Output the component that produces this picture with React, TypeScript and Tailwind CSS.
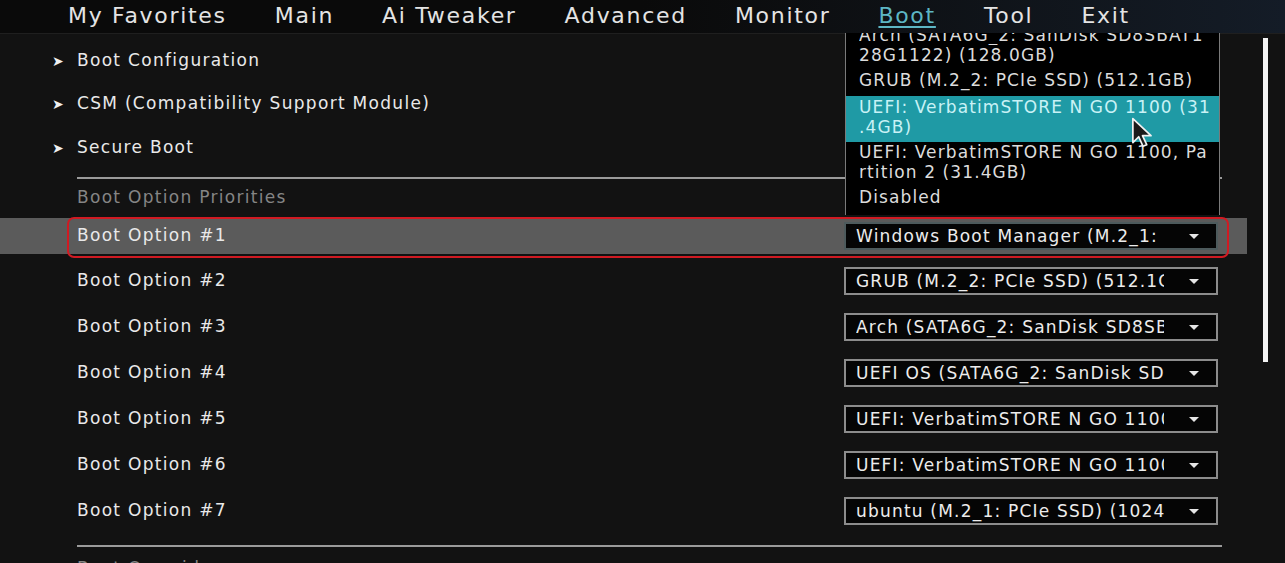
import React from "react";

const tabs = ["My Favorites", "Main", "Ai Tweaker", "Advanced", "Monitor", "Boot", "Tool", "Exit"];

const menus = [
  { label: "Boot Configuration", h: "h-[44px]" },
  { label: "CSM (Compatibility Support Module)", h: "h-[42px]" },
  { label: "Secure Boot", h: "h-[46px]" },
];

const options = [
  "Windows Boot Manager (M.2_1: PCIe SSD) (1024.2GB)",
  "GRUB (M.2_2: PCIe SSD) (512.1GB)",
  "Arch (SATA6G_2: SanDisk SD8SBAT128G1122) (128.0GB)",
  "UEFI OS (SATA6G_2: SanDisk SD8SBAT128G1122) (128.0GB)",
  "UEFI: VerbatimSTORE N GO 1100 (31.4GB)",
  "UEFI: VerbatimSTORE N GO 1100, Partition 2 (31.4GB)",
  "ubuntu (M.2_1: PCIe SSD) (1024.2GB)",
];

function Caret() {
  return (
    <svg width="12" height="7" viewBox="0 0 12 7" className="shrink-0">
      <path d="M1 1 L11 1 L6 6 Z" fill="#e6e6e6" />
    </svg>
  );
}

function SelectBox({ value, active }: { value: string; active?: boolean }) {
  return (
    <div
      className={`w-[374px] h-[28px] flex items-center bg-[#050505] border-2 ${
        active ? "border-[#4d5a5c]" : "border-[#8c8c8c]"
      }`}
    >
      <div className="w-[308px] ml-[10px] overflow-hidden whitespace-nowrap text-[17px] tracking-[1.2px] text-[#ececec] leading-[22px]">
        {value}
      </div>
      <div className="flex-1 flex justify-center pl-[8px]">
        <Caret />
      </div>
    </div>
  );
}

function Cursor() {
  return (
    <svg width="24" height="32" viewBox="0 0 22 30" className="absolute left-[1131px] top-[117px]">
      <path
        d="M1.5 1.5 L1.5 24 L7 18.5 L11 27.5 L14.5 26 L10.5 17.5 L18.5 17.5 Z"
        fill="#1a1a1a"
        stroke="#f2f2f2"
        strokeWidth="1.6"
        strokeLinejoin="round"
      />
    </svg>
  );
}

export default function App() {
  return (
    <div className="relative w-[1285px] h-[563px] overflow-hidden bg-[#121212] font-['DejaVu_Sans',sans-serif] text-[#e9e9e9]">
      {/* Top tabs */}
      <div className="h-[34px] flex items-start pt-[3px] pl-[68px] gap-[48px] border-b border-[#1f1f1f] bg-gradient-to-r from-[#0a0a0a] via-[#0a0a0a] to-[#141c27]">
        {tabs.map((t) =>
          t === "Boot" ? (
            <span
              key={t}
              className="text-[22px] tracking-[1.7px] leading-[26px] text-[#5db6c4] underline decoration-2 underline-offset-[3px]"
            >
              {t}
            </span>
          ) : (
            <span key={t} className="text-[22px] tracking-[1.7px] leading-[26px] text-[#e4e4e4]">
              {t}
            </span>
          )
        )}
      </div>

      <div className="flex">
        <div className="w-[1247px] flex flex-col pt-[5px] text-[17px] tracking-[1.3px]">
          {menus.map((m) => (
            <div key={m.label} className={`${m.h} flex items-center pl-[52px]`}>
              <span className="w-[25px] text-[14px] tracking-normal text-[#f0f0f0]">➤</span>
              <span>{m.label}</span>
            </div>
          ))}
          <div className="ml-[77px] mr-[25px] mt-[6px] h-[2px] bg-[#9a9a9a]" />
          <div className="h-[37px] flex items-center pl-[77px] text-[#858585]">Boot Option Priorities</div>

          {options.map((o, i) => (
            <div
              key={o}
              className={`relative flex items-center justify-between pl-[77px] pr-[29px] ${
                i === 0 ? "h-[36px] bg-[#5b5b5b] mt-[2px] mb-[4px]" : "h-[46px]"
              }`}
            >
              <span>Boot Option #{i + 1}</span>
              <SelectBox value={o} active={i === 0} />
              {i === 0 && (
                <div className="absolute left-[67px] right-[18px] top-[-1px] bottom-[-4px] border-2 border-[#d01a22] rounded-[7px]" />
              )}
            </div>
          ))}

          <div className="ml-[77px] mr-[25px] mt-[11px] h-[2px] bg-[#9a9a9a]" />
          <div className="pl-[77px] pt-[13px] leading-none text-[#858585]">Boot Override</div>
        </div>

        {/* scrollbar */}
        <div className="flex-1 pt-[4px] pl-[16px]">
          <div className="w-[5px] h-[324px] bg-[#f4f4f4]" />
        </div>
      </div>

      {/* open dropdown list */}
      <div className="absolute left-[845px] top-[33px] w-[375px] h-[182px] bg-black border-x border-[#7a7a7a] overflow-hidden text-[17px] tracking-[1.1px] leading-[20px] whitespace-nowrap">
        <div className="px-[13px] text-[#dcdcdc]">
          <div className="h-[12px] overflow-hidden">
            <div className="mt-[-8px]">Arch (SATA6G_2: SanDisk SD8SBAT1</div>
          </div>
          <div>28G1122) (128.0GB)</div>
          <div className="pt-[5px] pb-[6px]">GRUB (M.2_2: PCIe SSD) (512.1GB)</div>
        </div>
        <div className="bg-[#1f9aa5] text-[#c9f2f6] px-[13px] pt-[1px] pb-[5px]">
          <div>UEFI: VerbatimSTORE N GO 1100 (31</div>
          <div>.4GB)</div>
        </div>
        <div className="px-[13px] text-[#dcdcdc]">
          <div>UEFI: VerbatimSTORE N GO 1100, Pa</div>
          <div>rtition 2 (31.4GB)</div>
          <div className="pt-[5px]">Disabled</div>
        </div>
      </div>

      <Cursor />
    </div>
  );
}
